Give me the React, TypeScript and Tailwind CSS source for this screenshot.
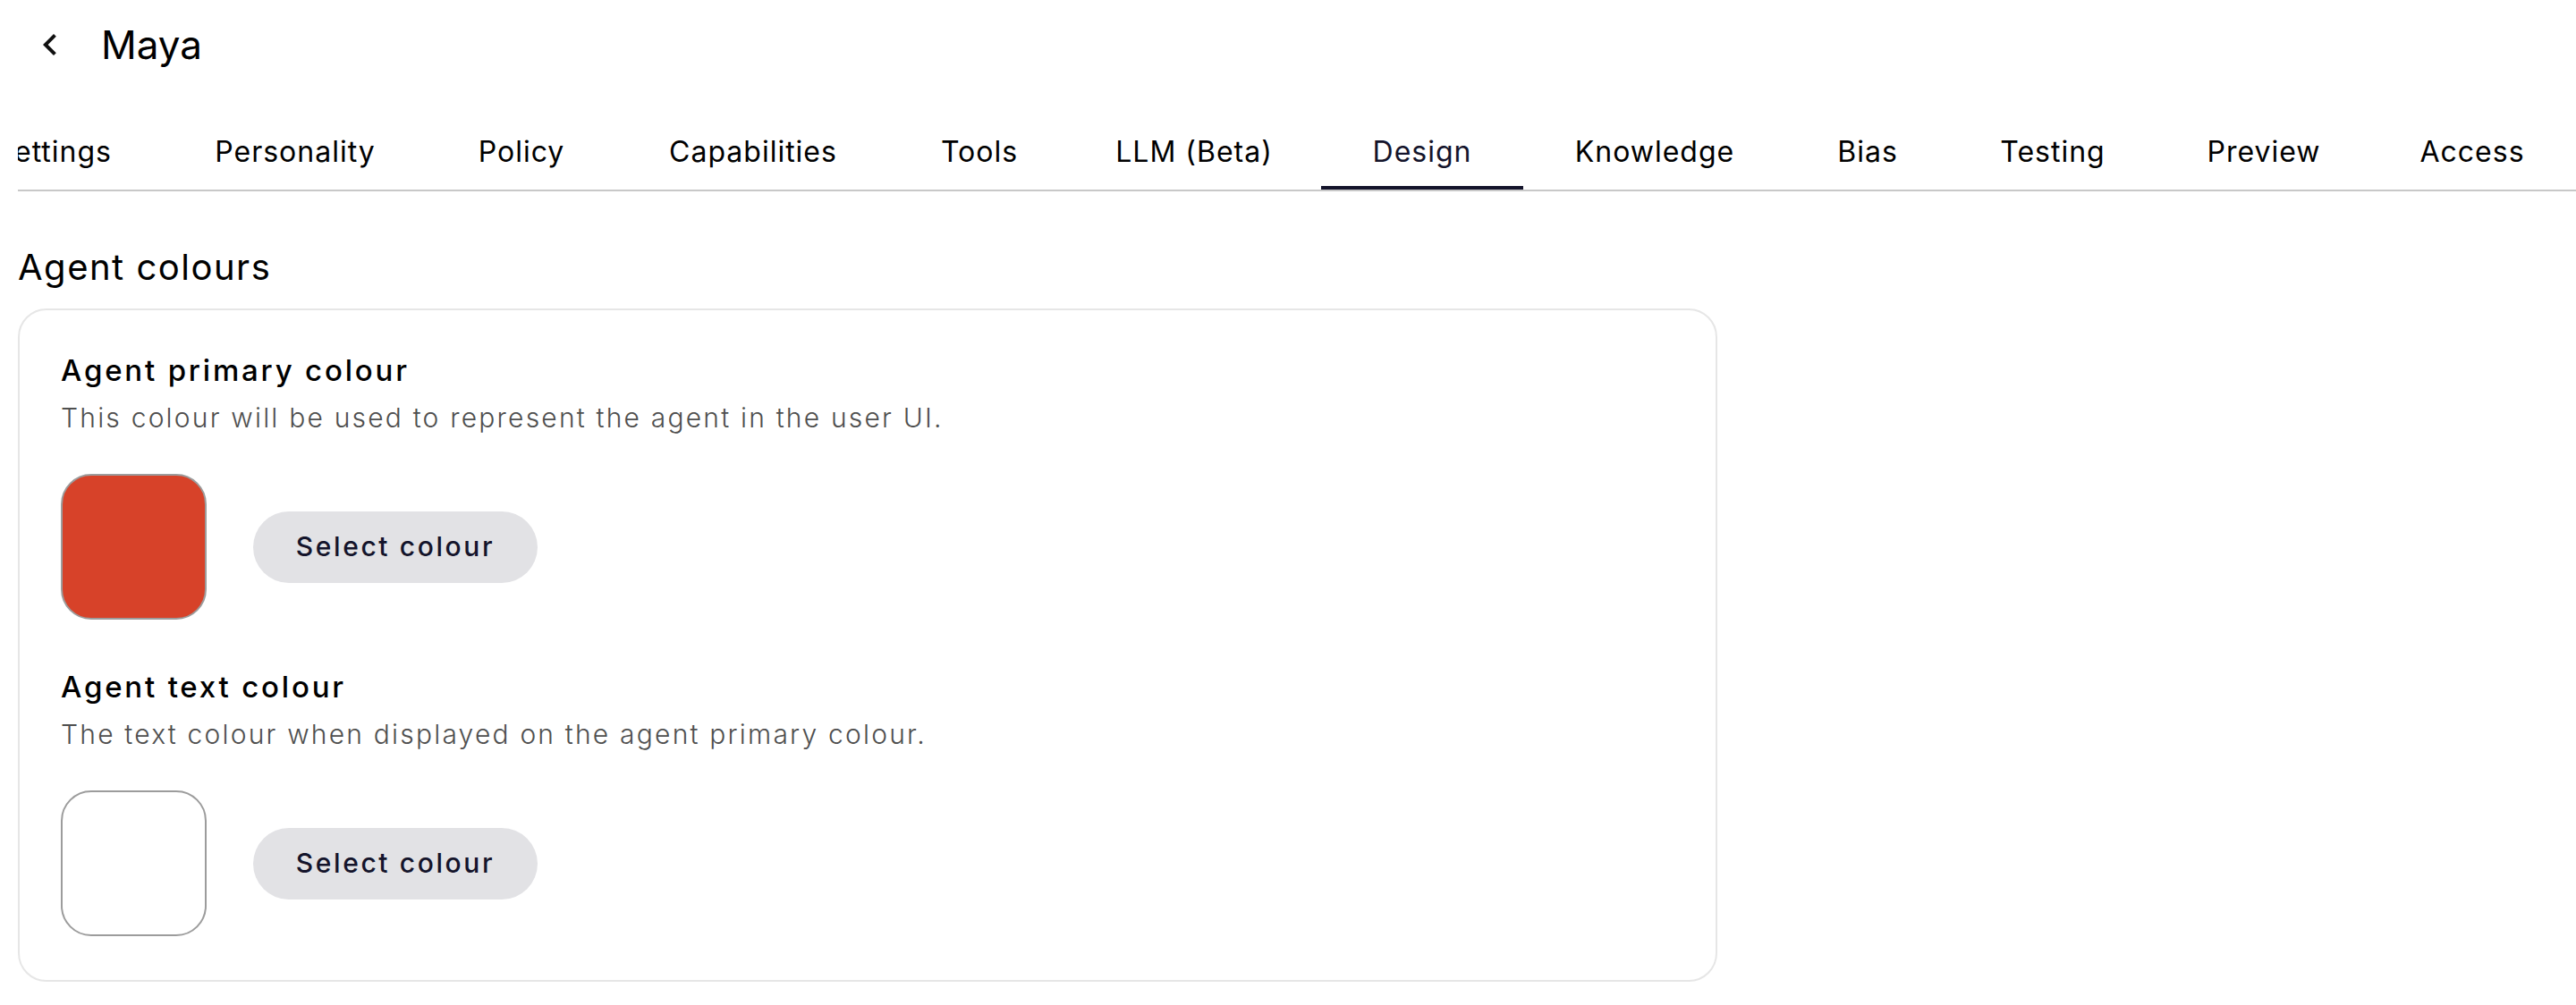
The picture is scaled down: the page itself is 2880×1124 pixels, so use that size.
import React, { useState } from "react";

const tabs = [
  { label: "Settings", w: "" },
  { label: "Personality", w: "w-[298px]" },
  { label: "Policy", w: "w-[208px]" },
  { label: "Capabilities", w: "w-[310px]" },
  { label: "Tools", w: "w-[196px]" },
  { label: "LLM (Beta)", w: "w-[284px]" },
  { label: "Design", w: "w-[226px]" },
  { label: "Knowledge", w: "w-[294px]" },
  { label: "Bias", w: "w-[182px]" },
  { label: "Testing", w: "w-[232px]" },
  { label: "Preview", w: "w-[240px]" },
  { label: "Access", w: "w-[226px]" },
];

function ColourSetting({
  title,
  description,
  colour,
}: {
  title: string;
  description: string;
  colour: string;
}) {
  return (
    <div className="flex flex-col">
      <h3 className="text-[33px] leading-[48px] font-medium text-black tracking-[2.8px]">
        {title}
      </h3>
      <p className="mt-2 text-[30px] leading-[42px] font-light text-[#4f4f4f] tracking-[2.2px]">
        {description}
      </p>
      <div className="mt-[42px] flex items-center gap-[52px]">
        <div
          className="w-[163px] h-[163px] rounded-[34px] border-2 border-[#9c9c9c]"
          style={{ backgroundColor: colour }}
        />
        <button className="h-[80px] w-[318px] rounded-full bg-[#e2e2e5] text-[30px] font-medium text-[#14142b] tracking-[2.6px]">
          Select colour
        </button>
      </div>
    </div>
  );
}

export default function App() {
  const [active] = useState("Design");

  return (
    <div className="min-h-screen bg-white pl-[20px] font-['Inter','Noto_Sans',sans-serif] text-black">
      {/* header */}
      <div className="h-[128px] flex items-start pt-[26px]">
        <button className="w-[48px] h-[48px] ml-[12px] flex items-center justify-center">
          <svg width="48" height="48" viewBox="0 0 24 24" fill="#111">
            <path d="M15.41 7.41L14 6l-6 6 6 6 1.41-1.41L10.83 12z" />
          </svg>
        </button>
        <h1 className="ml-[33px] text-[44px] leading-[48px] font-normal">Maya</h1>
      </div>

      {/* tabs */}
      <div className="overflow-hidden border-b-2 border-[#c8c8c8]">
        <div className="flex justify-end pr-[3px]">
          {tabs.map((t) => (
            <div
              key={t.label}
              className={`relative shrink-0 h-[84px] flex items-center justify-center whitespace-nowrap text-[32px] tracking-[1px] ${
                t.w ? t.w : "px-[56px]"
              } ${active === t.label ? "text-[#14142b]" : "text-black"}`}
            >
              {t.label}
              {active === t.label && (
                <div className="absolute left-0 right-0 bottom-0 h-[4px] bg-[#14142b]" />
              )}
            </div>
          ))}
        </div>
      </div>

      {/* content */}
      <h2 className="mt-[55px] text-[40px] leading-[60px] font-normal tracking-[1.5px]">
        Agent colours
      </h2>
      <div className="mt-[16px] w-[1900px] rounded-[32px] border-2 border-[#e6e6e6] pl-[46px] pt-[43px] pb-[49px] flex flex-col gap-[51px]">
        <ColourSetting
          title="Agent primary colour"
          description="This colour will be used to represent the agent in the user UI."
          colour="#d74229"
        />
        <ColourSetting
          title="Agent text colour"
          description="The text colour when displayed on the agent primary colour."
          colour="#ffffff"
        />
      </div>
    </div>
  );
}
